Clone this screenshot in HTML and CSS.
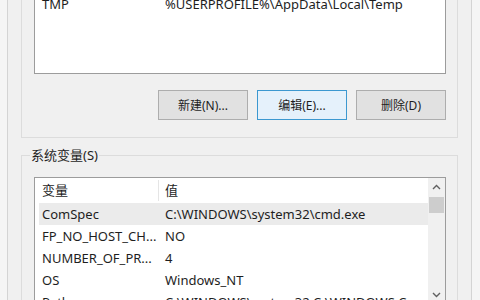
FILE: index.html
```html
<!DOCTYPE html>
<html lang="zh-CN">
<head>
  <meta charset="UTF-8">
  <title>环境变量</title>
  <link rel="stylesheet" href="styles.css">
</head>
<body>

<div class="window">

  <!-- 用户变量 -->
  <fieldset class="group">
    <legend>用户变量(U)</legend>
    <div class="list list-user">
      <div class="rows">
        <div class="row head"><span>变量</span><span>值</span></div>
        <div class="row"><span>TEMP</span><span>%USERPROFILE%\AppData\Local\Temp</span></div>
        <div class="row"><span>TMP</span><span>%USERPROFILE%\AppData\Local\Temp</span></div>
      </div>
    </div>
    <div class="buttons">
      <button>新建(N)...</button>
      <button class="focus">编辑(E)...</button>
      <button>删除(D)</button>
    </div>
  </fieldset>

  <!-- 系统变量 -->
  <fieldset class="group">
    <legend>系统变量(S)</legend>
    <div class="list list-sys">
      <div class="rows">
        <div class="row head"><span>变量</span><span>值</span></div>
        <div class="row selected"><span>ComSpec</span><span>C:\WINDOWS\system32\cmd.exe</span></div>
        <div class="row"><span>FP_NO_HOST_CH...</span><span>NO</span></div>
        <div class="row"><span>NUMBER_OF_PR...</span><span>4</span></div>
        <div class="row"><span>OS</span><span>Windows_NT</span></div>
        <div class="row"><span>Path</span><span>C:\WINDOWS\system32;C:\WINDOWS;C...</span></div>
      </div>
      <div class="scrollbar">
        <div class="arrow">
          <svg width="9" height="6" viewBox="0 0 9 6"><polyline points="1,5 4.5,1.5 8,5" fill="none" stroke="#606060" stroke-width="1.4"/></svg>
        </div>
        <div class="track"><div class="thumb"></div></div>
        <div class="arrow">
          <svg width="9" height="6" viewBox="0 0 9 6"><polyline points="1,1 4.5,4.5 8,1" fill="none" stroke="#606060" stroke-width="1.4"/></svg>
        </div>
      </div>
    </div>
  </fieldset>

</div>

</body>
</html>
```

FILE: styles.css
```css
body {
  margin: 0;
  height: 300px;
  overflow: hidden;
  background: #f5f5f5;
  font-family: "Noto Sans", "Noto Sans CJK SC", sans-serif;
  font-size: 13px;
  color: #1e1e1e;
}
.window {
  box-sizing: border-box;
  width: 465px;
  margin: -85px 0 0 7px;
  padding-bottom: 40px;
  background: #f0f0f0;
  border-left: 1px solid #d4d4d4;
  border-right: 1px solid #d4d4d4;
}
.group {
  margin: 0 13px 9px 13px;
  padding: 14px 11px 17px 12px;
  border: 1px solid #dcdcdc;
  min-width: 0;
}
.group legend {
  margin-left: -4px;
  padding: 0 1px;
  line-height: 16px;
}
.list {
  display: flex;
  box-sizing: border-box;
  background: #fff;
  border: 1px solid #9c9c9c;
}
.list-user {
  height: 129px;
}
.list-sys {
  height: 127px;
}
.rows {
  flex: 1;
  min-width: 0;
}
.row {
  display: grid;
  grid-template-columns: 119px 1fr;
  height: 22px;
  line-height: 22px;
  margin-left: 4px;
  white-space: nowrap;
  overflow: hidden;
}
.row span {
  padding-left: 3px;
}
.row span + span {
  padding-left: 7px;
}
.row.head {
  height: 25px;
  line-height: 25px;
}
.row.head span + span {
  padding-left: 6px;
  border-left: 1px solid #e5e5e5;
  margin: 2px 0;
  line-height: 21px;
}
.row.selected {
  background: #ebebeb;
}
.scrollbar {
  width: 17px;
  display: flex;
  flex-direction: column;
  background: #f0f0f0;
}
.arrow {
  height: 17px;
  display: flex;
  align-items: center;
  justify-content: center;
}
.track {
  flex: 1;
  padding-top: 2px;
}
.thumb {
  height: 16px;
  margin: 0 1px;
  background: #cdcdcd;
}
.buttons {
  display: flex;
  justify-content: flex-end;
  gap: 9px;
  margin-top: 16px;
}
button {
  width: 90px;
  height: 30px;
  font-family: inherit;
  font-size: 12px;
  color: #1e1e1e;
  background: #e1e1e1;
  border: 1px solid #adadad;
  padding: 0;
}
button.focus {
  background: #e5f1fb;
  border-color: #3c98d0;
}
```
